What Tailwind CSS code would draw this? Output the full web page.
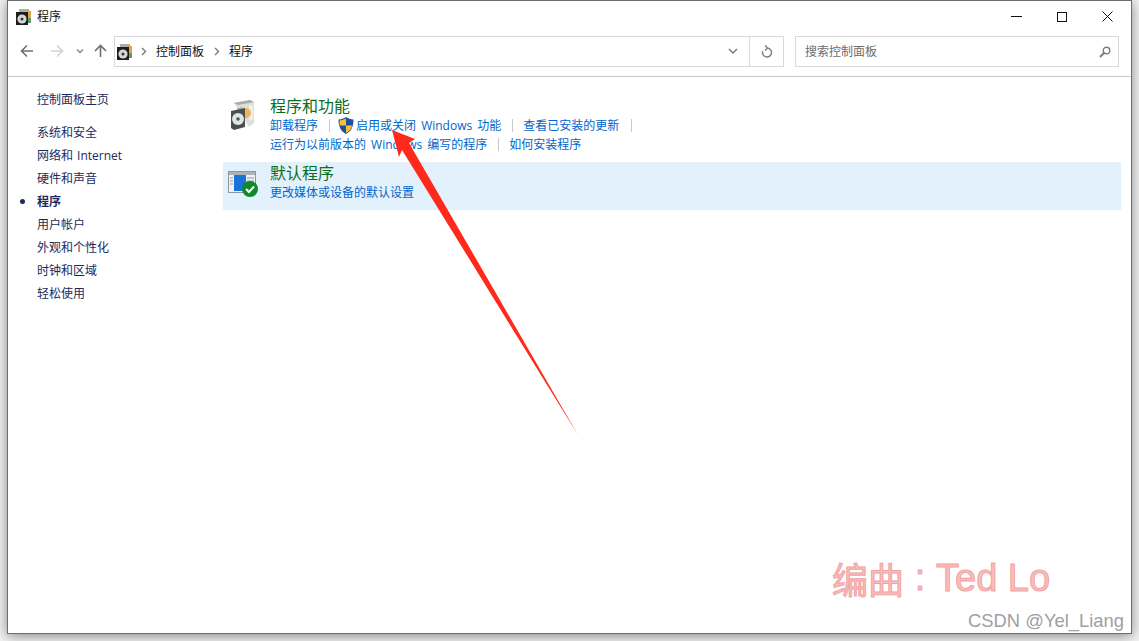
<!DOCTYPE html>
<html lang="zh-CN">
<head>
  <meta charset="UTF-8" />
  <title>程序</title>
  <script src="https://cdn.jsdelivr.net/npm/@tailwindcss/browser@4"></script>
</head>
<body class="relative w-[1139px] h-[641px] overflow-hidden bg-[#f3f3f3] font-['Open_Sans','Noto_Sans_CJK_SC',sans-serif] text-[12px]">
  <!-- window -->
  <div class="ml-[7px] w-[1125px] h-[634px] bg-white border border-[#6d6d6d] flex flex-col shadow-[0_2px_12px_rgba(0,0,0,0.45)]">
    <!-- title bar -->
    <header class="h-[31px] flex items-center shrink-0">
      <svg class="ml-[8px]" width="16" height="16" viewBox="0 0 16 16">
        <path d="M3 0h10v3H3z" fill="#a9b0a8"/>
        <path d="M11 2h4v12h-4z" fill="#e3a63f"/>
        <path d="M12 9h3v5h-3z" fill="#5f9a74"/>
        <rect x="0" y="3" width="12" height="13" fill="#1d1d1d"/>
        <circle cx="6" cy="10" r="4.600" fill="#d6d6d6"/>
        <circle cx="6" cy="10" r="1.500" fill="#333"/>
      </svg>
      <span class="ml-[5px] text-[#111]">程序</span>
      <div class="ml-auto flex items-center">
        <svg class="mr-[35px]" width="11" height="11" viewBox="0 0 11 11"><path d="M0 5.500h11" stroke="#111" fill="none"/></svg>
        <svg class="mr-[35px]" width="10" height="10" viewBox="0 0 10 10"><rect x="0.500" y="0.500" width="9" height="9" stroke="#111" fill="none"/></svg>
        <svg class="mr-[18px]" width="11" height="11" viewBox="0 0 11 11"><path d="M0.500 0.500l10 10M10.500 0.500l-10 10" stroke="#111" fill="none"/></svg>
      </div>
    </header>

    <!-- toolbar -->
    <div class="h-[45px] shrink-0 flex items-start border-b border-[#c8c8c8] pt-[4px]">
      <svg class="ml-[12px]" width="14" height="30" viewBox="0 0 14 30"><path d="M13 15H1.500M7 9.500L1.500 15 7 20.500" stroke="#6f6f6f" stroke-width="1.600" fill="none"/></svg>
      <svg class="ml-[16px]" width="14" height="30" viewBox="0 0 14 30"><path d="M1 15h11.500M7 9.500l5.500 5.500L7 20.500" stroke="#d4d4d4" stroke-width="1.600" fill="none"/></svg>
      <svg class="ml-[12px]" width="8" height="30" viewBox="0 0 8 30"><path d="M1 13.500l3 3 3-3" stroke="#8a8a8a" stroke-width="1.500" fill="none"/></svg>
      <svg class="ml-[10px]" width="13" height="30" viewBox="0 0 13 30"><path d="M6.500 21V10M1 15l5.500-5.500L12 15" stroke="#6f6f6f" stroke-width="1.600" fill="none"/></svg>
      <!-- address -->
      <div class="ml-[7px] w-[670px] h-[31px] border border-[#d9d9d9] flex items-center">
        <svg class="ml-[2px]" width="16" height="16" viewBox="0 0 16 16">
          <path d="M3 0h10v3H3z" fill="#a9b0a8"/>
          <path d="M11 2h4v12h-4z" fill="#e3a63f"/>
          <path d="M12 9h3v5h-3z" fill="#5f9a74"/>
          <rect x="0" y="3" width="12" height="13" fill="#1d1d1d"/>
          <circle cx="6" cy="10" r="4.600" fill="#d6d6d6"/>
          <circle cx="6" cy="10" r="1.500" fill="#333"/>
        </svg>
        <svg class="ml-[8px]" width="6" height="9" viewBox="0 0 6 9"><path d="M1 1l3.500 3.500L1 8" stroke="#7a7a7a" stroke-width="1.400" fill="none"/></svg>
        <span class="ml-[9px] text-[#111]">控制面板</span>
        <svg class="ml-[10px]" width="6" height="9" viewBox="0 0 6 9"><path d="M1 1l3.500 3.500L1 8" stroke="#7a7a7a" stroke-width="1.400" fill="none"/></svg>
        <span class="ml-[9px] text-[#111]">程序</span>
        <svg class="ml-auto mr-[11px]" width="10" height="7" viewBox="0 0 10 7"><path d="M1 1l4 4 4-4" stroke="#7a7a7a" stroke-width="1.500" fill="none"/></svg>
        <div class="w-[34px] h-full border-l border-[#d9d9d9] flex items-center justify-center">
          <svg width="12" height="13" viewBox="0 0 12 13"><path d="M6 3a4.500 4.500 0 1 1-4.300 3.200M4 0.500L6.500 3 4 5.500" stroke="#7d7d7d" stroke-width="1.400" fill="none"/></svg>
        </div>
      </div>
      <!-- search -->
      <div class="ml-[11px] w-[324px] h-[31px] border border-[#d9d9d9] flex items-center">
        <span class="ml-[9px] text-[#6d6d6d]">搜索控制面板</span>
        <svg class="ml-auto mr-[7px]" width="12" height="12" viewBox="0 0 12 12"><circle cx="7.500" cy="4.500" r="3.300" stroke="#7d7d7d" stroke-width="1.400" fill="none"/><path d="M5 7L1 11" stroke="#7d7d7d" stroke-width="2" fill="none"/></svg>
      </div>
    </div>

    <!-- body -->
    <div class="flex flex-1">
      <aside class="w-[215px] shrink-0 pl-[29px] pt-[14px] text-[#1a2a5e] relative">
        <a class="block h-[23px] leading-[18px]">控制面板主页</a>
        <ul class="mt-[7px] leading-[23px]">
          <li>系统和安全</li>
          <li class="[word-spacing:1px]">网络和 Internet</li>
          <li>硬件和声音</li>
          <li class="relative font-bold"><span class="absolute left-[-17px] top-[9px] w-[5px] h-[5px] rounded-full bg-[#1a2a5e]"></span>程序</li>
          <li>用户帐户</li>
          <li>外观和个性化</li>
          <li>时钟和区域</li>
          <li>轻松使用</li>
        </ul>
      </aside>

      <main class="flex-1 pt-[15px]">
        <!-- programs -->
        <section class="flex h-[70px] pl-[5px]">
          <svg class="mt-[8px] ml-[3px]" width="24" height="30" viewBox="0 0 24 30">
            <path d="M3 3L19 0l4 2v21l-5 4z" fill="#dedfd9"/>
            <path d="M3 3L19 0l4 2L7 5z" fill="#a8aaa4"/>
            <path d="M18 5h4v15h-4z" fill="#f0f0ea"/>
            <circle cx="15" cy="13" r="5" fill="#f0b25a"/>
            <path d="M6 8l6-1v6H6z" fill="#a9c7ad"/>
            <path d="M0 11l14-3v19L3 30l-3-2z" fill="#4a4f4d"/>
            <circle cx="7" cy="19" r="6" fill="#dfe4e6"/>
            <circle cx="7" cy="19" r="1.800" fill="#555"/>
          </svg>
          <div class="ml-[15px]">
            <h2 class="text-[16px] leading-[18px] mt-[5px] text-[#0a6f1c]">程序和功能</h2>
            <div class="flex items-center h-[19px] mt-[1px] text-[#0066cc]">
              <a>卸载程序</a>
              <span class="ml-[11px] mr-[8px] w-px h-[13px] bg-[#c8c8c8]"></span>
              <svg width="16" height="17" viewBox="0 0 16 17">
                <path d="M8 0c2 1.500 4.500 2.300 7.500 2.500 0 7-2 11.500-7.500 14.500C2.500 14 .5 9.500.5 2.500 3.500 2.300 6 1.500 8 0z" fill="#1e4f9c"/>
                <path d="M8 1.500v7H1.800C1.600 7 1.500 5.500 1.500 3.500 3.800 3.300 6 2.700 8 1.500zM8 8.500h6.200c-.7 3.300-2.700 5.700-6.200 7.400z" fill="#f6c23a"/>
              </svg>
              <a class="ml-[2px] [word-spacing:2px]">启用或关闭 Windows 功能</a>
              <span class="ml-[11px] mr-[10px] w-px h-[13px] bg-[#c8c8c8]"></span>
              <a>查看已安装的更新</a>
              <span class="ml-[12px] w-px h-[13px] bg-[#c8c8c8]"></span>
            </div>
            <div class="flex items-center h-[19px] text-[#0066cc]">
              <a class="[word-spacing:2px]">运行为以前版本的 Windows 编写的程序</a>
              <span class="ml-[11px] mr-[10px] w-px h-[13px] bg-[#c8c8c8]"></span>
              <a>如何安装程序</a>
            </div>
          </div>
        </section>
        <!-- defaults -->
        <section class="flex w-[898px] h-[48px] pl-[5px] bg-[#e3f1fc]">
          <svg class="mt-[8px]" width="30" height="28" viewBox="0 0 30 28">
            <rect x="0.500" y="1.500" width="27" height="21" fill="#eef3f7" stroke="#8f979e"/>
            <rect x="1" y="2" width="26" height="3" fill="#a9b3bb"/>
            <rect x="6" y="5" width="12" height="16" fill="#1a73d9"/>
            <path d="M19 8h7M19 11h7M19 14h7M2 8h3M2 11h3M2 14h3" stroke="#8f979e"/>
            <circle cx="22" cy="19" r="8" fill="#0f8a2a"/>
            <path d="M18 19l3 3 5-5.500" stroke="#fff" stroke-width="2" fill="none"/>
          </svg>
          <div class="ml-[12px]">
            <h2 class="text-[16px] leading-[18px] mt-[2px] text-[#0a6f1c]">默认程序</h2>
            <a class="block leading-[19px] mt-[1px] text-[#0066cc]">更改媒体或设备的默认设置</a>
          </div>
        </section>
      </main>
    </div>
  </div>

  <!-- red annotation arrow -->
  <svg class="absolute left-0 top-0 pointer-events-none" width="1139" height="641" viewBox="0 0 1139 641">
    <path d="M392 130L415 139L409 143L578 435L402 150L399 157Z" fill="#ff2a1c"/>
  </svg>

  <!-- watermarks -->
  <div class="absolute left-[832px] top-[556px] flex items-center text-[36px] leading-[44px] whitespace-nowrap text-[#fcbcbc] [-webkit-text-stroke:1px_#f0a3a3] font-['Noto_Sans_CJK_SC',sans-serif]">
    <span>编曲</span>
    <span class="w-[32px] text-center font-['Liberation_Sans',sans-serif]">:</span>
    <span class="text-[38px] font-['Liberation_Sans',sans-serif]">Ted Lo</span>
  </div>
  <div class="absolute left-[968px] top-[611px] text-[18.4px] leading-[20px] whitespace-nowrap text-[#a0a0a0] font-['Liberation_Sans',sans-serif]">CSDN @Yel_Liang</div>
</body>
</html>
